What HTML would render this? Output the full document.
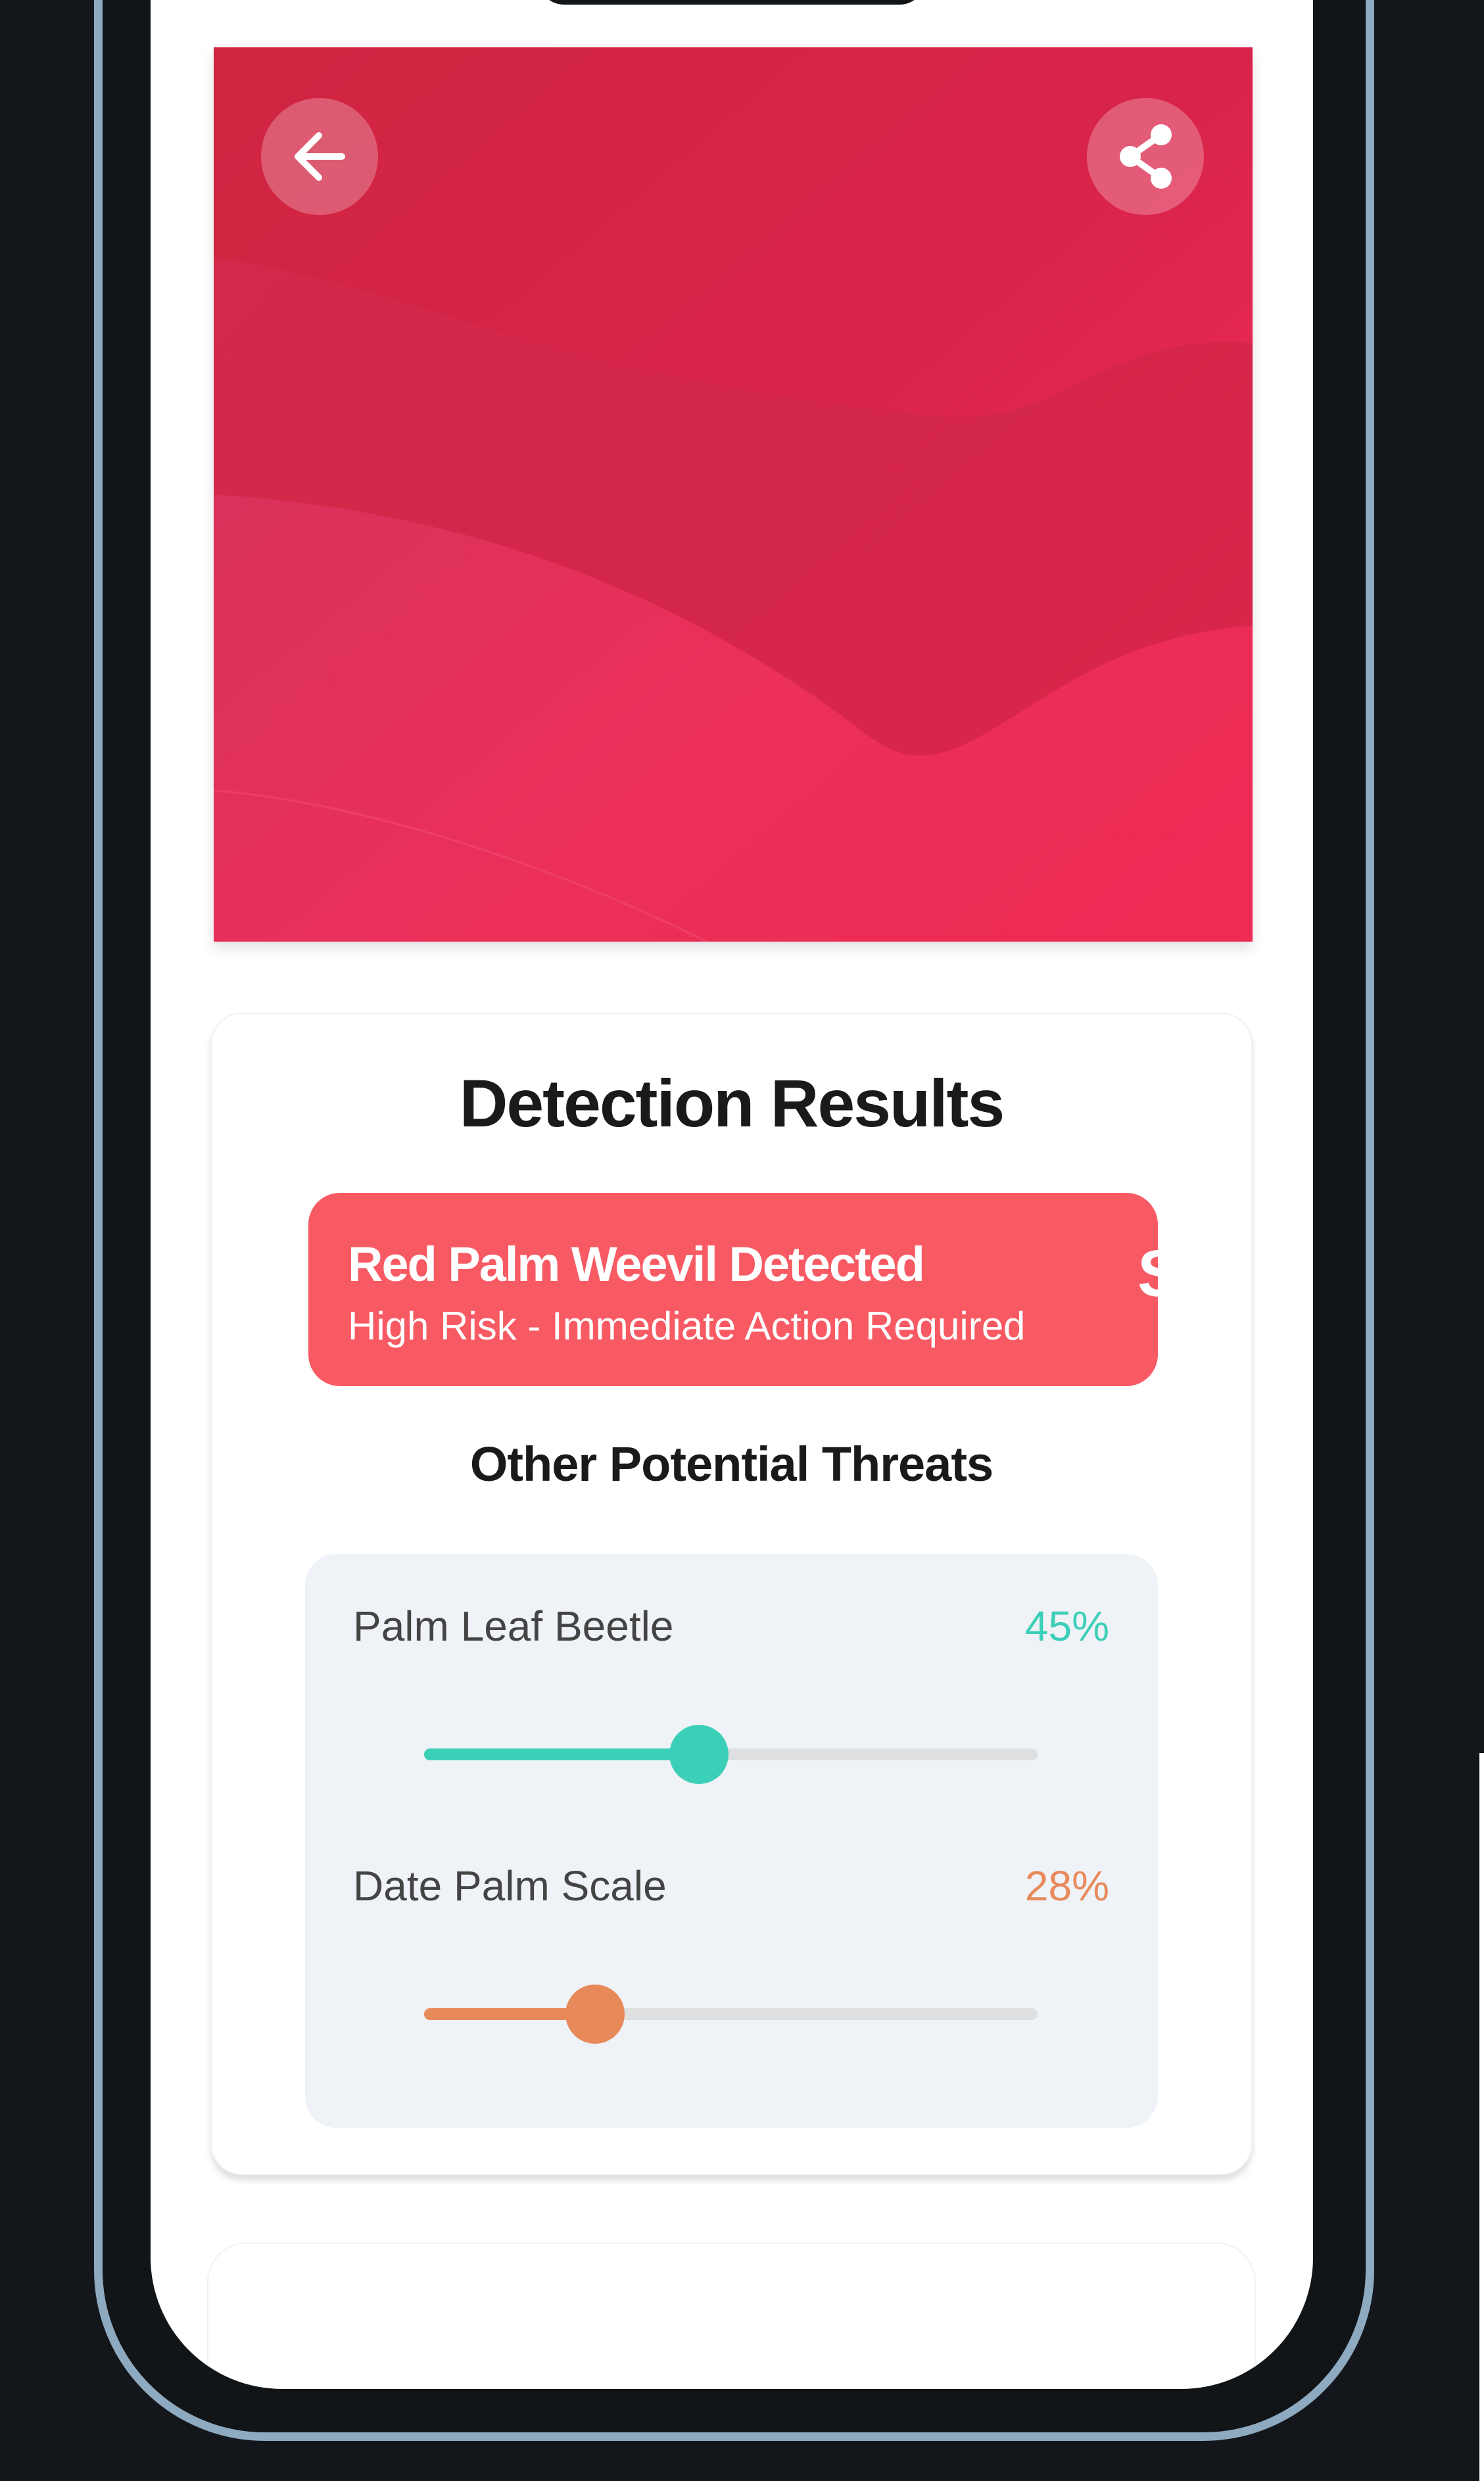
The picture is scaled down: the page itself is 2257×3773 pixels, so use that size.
<!DOCTYPE html>
<html><head><meta charset="utf-8"><style>
*{margin:0;padding:0;box-sizing:border-box}
html,body{width:2257px;height:3773px;background:#13171b;overflow:hidden;font-family:"Liberation Sans",sans-serif}
.abs{position:absolute}
</style></head><body>
<!-- phone frame -->
<div class="abs" style="left:143px;top:-300px;width:1947px;height:4012px;border:13px solid #8eaac0;border-radius:260px;background:#121518"></div>
<!-- screen -->
<div class="abs" style="left:229px;top:-200px;width:1768px;height:3833px;background:#fff;border-radius:200px;overflow:hidden">
  <div class="abs" style="left:86px;top:3610px;width:1595px;height:400px;border:2px solid #f2f2f2;border-radius:60px"></div>
</div>
<!-- notch -->
<div class="abs" style="left:818px;top:-40px;width:590px;height:47px;background:#121518;border-radius:0 0 40px 40px"></div>
<!-- hero -->
<div class="abs" style="left:325px;top:72px;width:1580px;height:1360px;overflow:hidden;box-shadow:0 10px 20px rgba(0,0,0,0.12)">
<svg width="1580" height="1360" viewBox="0 0 1580 1360">
<defs>
<linearGradient id="g" x1="0" y1="0" x2="1" y2="1">
<stop offset="0" stop-color="#cf2540"/><stop offset="0.5" stop-color="#d9244a"/><stop offset="1" stop-color="#fb2f5c"/>
</linearGradient>
<linearGradient id="g2" x1="0" y1="0" x2="1" y2="0.6">
<stop offset="0" stop-color="#d72c52"/><stop offset="1" stop-color="#c6223f"/>
</linearGradient>
<linearGradient id="g3" x1="0" y1="0" x2="1" y2="0.5">
<stop offset="0" stop-color="#d9335e"/><stop offset="0.6" stop-color="#f0325c"/><stop offset="1" stop-color="#f02c55"/>
</linearGradient>
</defs>
<rect width="1580" height="1360" fill="url(#g)"/>
<path d="M0 320 C300 360 500 500 1100 560 C1300 580 1350 430 1580 450 L1580 1360 L0 1360Z" fill="url(#g2)" opacity="0.55"/>
<path d="M0 680 C300 700 650 780 1000 1050 C1150 1160 1250 900 1580 880 L1580 1360 L0 1360Z" fill="url(#g3)" opacity="0.85"/>
<path d="M0 1130 C250 1150 550 1260 750 1360" stroke="#f04a73" stroke-width="3" fill="none" opacity="0.6"/>
<circle cx="161" cy="166" r="89" fill="#fff" fill-opacity="0.25"/>
<circle cx="1417" cy="166" r="89" fill="#fff" fill-opacity="0.25"/>
<path d="M195 166 H130 M160 134 L128 166 L160 198" stroke="#fff" stroke-width="10" fill="none" stroke-linecap="round" stroke-linejoin="round"/>
<g fill="#fff"><circle cx="1441" cy="133" r="16"/><circle cx="1394" cy="166" r="16"/><circle cx="1441" cy="199" r="16"/></g>
<path d="M1441 133 L1394 166 L1441 199" stroke="#fff" stroke-width="10" fill="none"/>
</svg>
</div>
<!-- card -->
<div class="abs" style="left:320px;top:1540px;width:1585px;height:1768px;background:#fff;border-radius:48px;border:2px solid #f1f1f1;box-shadow:0 8px 10px rgba(0,0,0,0.13)"></div>
<div class="abs" style="left:320px;top:1620px;width:1585px;text-align:center;font-size:102px;font-weight:bold;color:#1a1a1a;letter-spacing:-2px">Detection Results</div>
<div class="abs" style="left:469px;top:1814px;width:1292px;height:294px;background:#f85a63;border-radius:48px"></div>
<div class="abs" style="left:529px;top:1880px;font-size:74px;font-weight:bold;color:#fff;letter-spacing:-2px;white-space:nowrap">Red Palm Weevil Detected</div>
<div class="abs" style="left:529px;top:1982px;font-size:60px;color:#fff;white-space:nowrap">High Risk - Immediate Action Required</div>
<div class="abs" style="left:1730px;top:1880px;font-size:100px;font-weight:bold;color:#fff">S</div>
<div class="abs" style="left:320px;top:2184px;width:1585px;text-align:center;font-size:74px;font-weight:bold;color:#1a1a1a;letter-spacing:-1px">Other Potential Threats</div>
<!-- threats box -->
<div class="abs" style="left:464px;top:2363px;width:1297px;height:873px;background:#eff2f6;border-radius:48px"></div>
<div class="abs" style="left:537px;top:2436px;font-size:64px;color:#444">Palm Leaf Beetle</div>
<div class="abs" style="left:1540px;top:2436px;width:147px;text-align:right;font-size:64px;color:#3ccfb8">45%</div>
<div class="abs" style="left:645px;top:2659px;width:933px;height:18px;background:#dedfe0;border-radius:9px"></div>
<div class="abs" style="left:645px;top:2659px;width:420px;height:18px;background:#3ccfb8;border-radius:9px"></div>
<div class="abs" style="left:1018px;top:2623px;width:90px;height:90px;background:#3ccfb8;border-radius:50%"></div>
<div class="abs" style="left:537px;top:2831px;font-size:64px;color:#444">Date Palm Scale</div>
<div class="abs" style="left:1540px;top:2831px;width:147px;text-align:right;font-size:64px;color:#e8895a">28%</div>
<div class="abs" style="left:645px;top:3054px;width:933px;height:18px;background:#dedfe0;border-radius:9px"></div>
<div class="abs" style="left:645px;top:3054px;width:262px;height:18px;background:#e8895a;border-radius:9px"></div>
<div class="abs" style="left:860px;top:3018px;width:90px;height:90px;background:#e8895a;border-radius:50%"></div>
<div class="abs" style="left:2250px;top:2666px;width:7px;height:1107px;background:#fff"></div>
</body></html>
